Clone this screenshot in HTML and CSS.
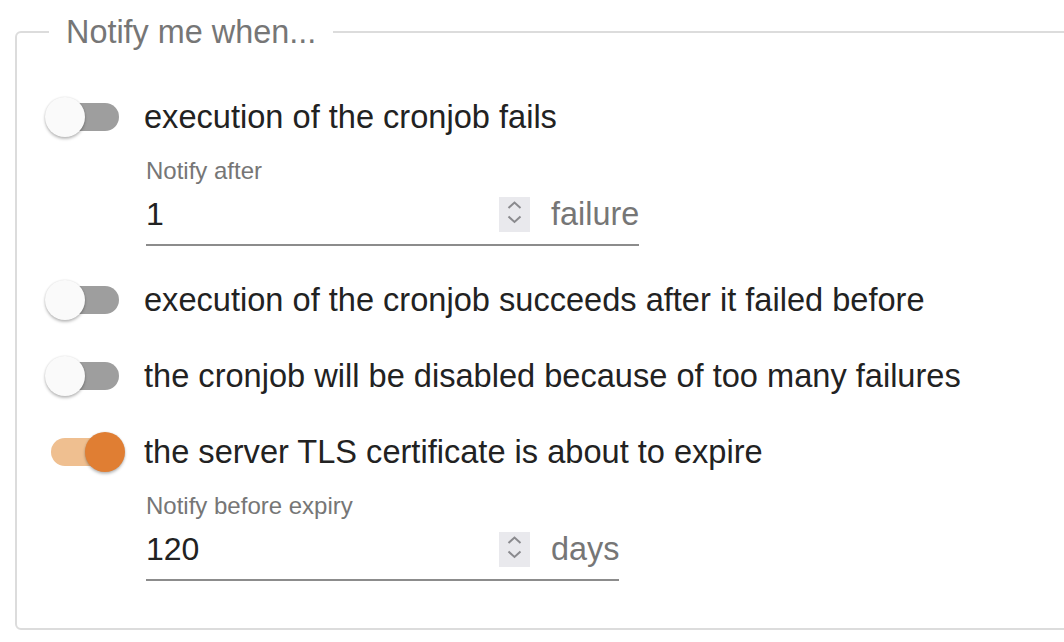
FILE: index.html
```html
<!DOCTYPE html>
<html lang="en">
<head>
	<meta charset="utf-8">
	<link rel="stylesheet" href="styles.css">
</head>
<body>

	<fieldset class="notify">
		<legend>Notify me when...</legend>

		<label class="row">
			<span class="switch"><span class="track"></span><span class="thumb"></span></span>
			<span class="text">execution of the cronjob fails</span>
		</label>

		<div class="field">
			<div class="field-label">Notify after</div>
			<div class="field-input">
				<input type="text" value="1">
				<span class="spin"><svg width="31" height="35" viewBox="0 0 31 35"><path d="M9.5 11 L15.5 5.5 L21.5 11 M9.5 19.5 L15.5 25 L21.5 19.5" fill="none" stroke="#8a8a8e" stroke-width="2"/></svg></span>
				<span class="suffix">failure</span>
			</div>
		</div>

		<label class="row">
			<span class="switch"><span class="track"></span><span class="thumb"></span></span>
			<span class="text">execution of the cronjob succeeds after it failed before</span>
		</label>

		<label class="row">
			<span class="switch"><span class="track"></span><span class="thumb"></span></span>
			<span class="text">the cronjob will be disabled because of too many failures</span>
		</label>

		<label class="row">
			<span class="switch on"><span class="track"></span><span class="thumb"></span></span>
			<span class="text">the server TLS certificate is about to expire</span>
		</label>

		<div class="field">
			<div class="field-label">Notify before expiry</div>
			<div class="field-input">
				<input type="text" value="120">
				<span class="spin"><svg width="31" height="35" viewBox="0 0 31 35"><path d="M9.5 11 L15.5 5.5 L21.5 11 M9.5 19.5 L15.5 25 L21.5 19.5" fill="none" stroke="#8a8a8e" stroke-width="2"/></svg></span>
				<span class="suffix">days</span>
			</div>
		</div>

	</fieldset>

</body>
</html>
```

FILE: styles.css
```css
html, body { overflow:hidden; }
body { margin:0; font-family:"Liberation Sans", Arial, sans-serif; color:#222; background:#fff; }

.notify { margin:14px -30px 0 15px; padding:0 0 31px 28px; border:2px solid #dcdcdc; border-radius:6px; min-width:0; }
.notify legend { margin-left:4px; padding:0 17px; font-size:32.4px; line-height:36px; color:#767676; }

.row { display:flex; align-items:center; height:76px; cursor:pointer; }
.row:first-of-type { margin-top:29px; }
.text { font-size:32.6px; margin-left:19px; }

.switch { position:relative; width:80px; height:40px; flex:none; }
.switch .track { position:absolute; left:6px; top:6px; width:68px; height:28px; border-radius:14px; background:#9e9e9e; }
.switch .thumb { position:absolute; left:0; top:0; width:40px; height:40px; border-radius:50%; background:#fafafa; box-shadow:0 2px 3px rgba(0,0,0,0.25), 0 0 2px rgba(0,0,0,0.12); }
.switch.on .track { background:#efbf90; }
.switch.on .thumb { left:40px; background:#e07e33; }

.field { display:inline-flex; flex-direction:column; margin:0 0 16px 101px; }
.field-label { font-size:24px; line-height:28px; margin-top:2px; color:#767676; }
.field-input { display:flex; align-items:center; height:59px; border-bottom:2px solid #8c8c8c; }
.field-input input { width:353px; border:0; padding:0; margin:0; font:inherit; font-size:32px; color:#222; outline:none; background:transparent; }
.spin { display:block; width:31px; height:35px; background:#e9e9ed; }
.spin svg { display:block; }
.suffix { font-size:32.4px; color:#767676; margin-left:21px; }
```
